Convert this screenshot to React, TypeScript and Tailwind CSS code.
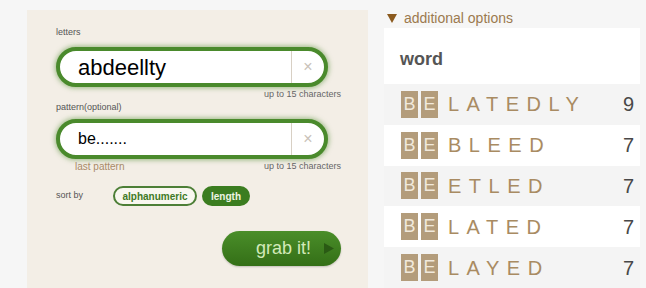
import React from "react";

const font = { fontFamily: '"Liberation Sans", Arial, sans-serif' };

function Field({ value, big }: { value: string; big?: boolean }) {
  return (
    <div className="flex h-[40px] w-[272px] items-stretch overflow-hidden rounded-full border-[4px] border-[#4a8a2c] bg-white shadow-[0_0_5px_1px_rgba(80,140,50,0.55)]">
      <div className={`flex flex-1 items-center pl-[18px] text-black ${big ? "text-[22px]" : "text-[16px]"}`}>{value}</div>
      <div className="flex w-[33px] items-center justify-center border-l border-[#d8d0c4] text-[16px] font-light text-[#c9c2b8]">×</div>
    </div>
  );
}

function Row({ rest, n, white }: { rest: string; n: number; white?: boolean }) {
  return (
    <div className={`flex h-[41px] items-center pl-[17px] pr-[6px] ${white ? "bg-white" : "bg-[#f4f4f4]"}`}>
      <div className="flex gap-[3px]">
        <div className="flex h-[27px] w-[17px] items-center justify-center bg-[#b39c7b] text-[18px] text-[#f1e9dc]">B</div>
        <div className="flex h-[27px] w-[17px] items-center justify-center bg-[#b39c7b] text-[18px] text-[#f1e9dc]">E</div>
      </div>
      <div className="ml-[10px] flex-1 text-[20px] tracking-[7.5px] text-[#a98b62]">{rest}</div>
      <div className="text-[20px] text-[#484848]">{n}</div>
    </div>
  );
}

export default function App() {
  return (
    <div style={font} className="flex h-[288px] w-[646px] overflow-hidden bg-[#f6f6f6]">
      <div className="ml-[27px] mt-[10px] flex h-[278px] w-[341px] flex-col bg-[#f3eee6] pl-[29px] pr-[27px] pt-[17px]">
        <div className="text-[9px] leading-[11px] text-[#555]">letters</div>
        <div className="mt-[9px]"><Field value="abdeellty" big /></div>
        <div className="mt-[2px] text-right text-[9px] leading-[11px] text-[#666]">up to 15 characters</div>
        <div className="mt-[2px] text-[9px] leading-[11px] text-[#555]">pattern(optional)</div>
        <div className="mt-[6px]"><Field value="be......." /></div>
        <div className="mt-[2px] flex justify-between text-[9px] leading-[11px]">
          <span className="ml-[19px] text-[10px] text-[#a88a67]">last pattern</span>
          <span className="text-[#666]">up to 15 characters</span>
        </div>
        <div className="mt-[14px] flex items-center">
          <span className="w-[57px] text-[9px] text-[#555]">sort by</span>
          <span className="flex h-[20px] w-[84px] items-center justify-center rounded-full border-2 border-[#4d7f37] bg-[#f9f7f0] text-[10px] font-bold text-[#3f7a26]">alphanumeric</span>
          <span className="ml-[5px] flex h-[20px] w-[48px] items-center justify-center rounded-full bg-[#3b7d20] text-[10px] font-bold text-[#eef5e4]">length</span>
        </div>
        <div className="mt-[25px] flex justify-end">
          <div className="flex h-[35px] w-[119px] items-center rounded-full bg-gradient-to-b from-[#4a8e29] to-[#346f17] shadow-[0_1px_2px_rgba(0,0,0,0.2)]">
            <span className="ml-[34px] text-[18px] text-[#d3eab9]">grab it!</span>
            <svg className="ml-[13px]" width="10" height="11" viewBox="0 0 10 11"><path d="M0 0 L10 5.5 L0 11 Z" fill="#2a5a14" /></svg>
          </div>
        </div>
      </div>
      <div className="ml-[16px] mt-[8px] flex w-[256px] flex-col">
        <div className="flex h-[20px] items-center pl-[3px] text-[14px] text-[#9c7a4f]">
          <svg className="mr-[7px]" width="10" height="9" viewBox="0 0 10 9"><path d="M0 0 L10 0 L5 9 Z" fill="#8b5a1e" /></svg>
          additional options
        </div>
        <div className="flex h-[56px] items-center bg-white pl-[16px] pt-[8px] text-[18px] font-bold text-[#555]">word</div>
        <Row rest="LATEDLY" n={9} />
        <Row rest="BLEED" n={7} white />
        <Row rest="ETLED" n={7} />
        <Row rest="LATED" n={7} white />
        <Row rest="LAYED" n={7} />
      </div>
    </div>
  );
}
